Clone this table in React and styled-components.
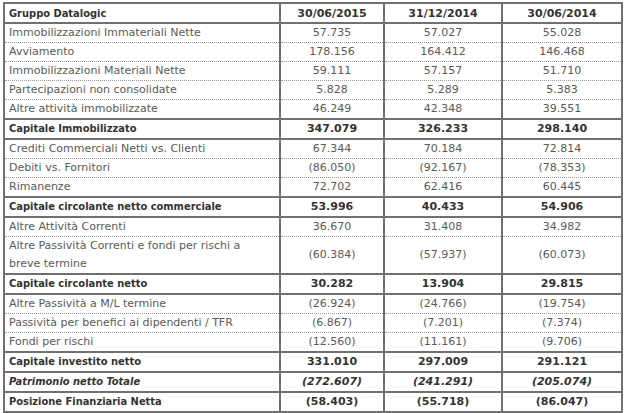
import React from 'react';
import styled, { createGlobalStyle } from 'styled-components';

const GlobalStyle = createGlobalStyle`
  html, body {
    margin: 0;
    padding: 0;
    background: #fff;
  }
  body {
    font-family: "DejaVu Sans", Verdana, sans-serif;
  }
`;

const Wrapper = styled.div`
  padding: 2px 3px;
  width: 624px;
  box-sizing: border-box;
`;

const Table = styled.table`
  width: 618px;
  border-collapse: collapse;
  table-layout: fixed;
  border: 2px solid #707070;
  font-size: 11px;
`;

const HeadCell = styled.th`
  height: 18px;
  padding: 0 4px;
  font-weight: bold;
  color: #333;
  font-family: ${(p) => (p.$label ? '"DejaVu Sans Condensed", "DejaVu Sans", sans-serif' : 'inherit')};
  text-align: ${(p) => (p.$label ? 'left' : 'center')};
  border-left: 2px solid #707070;
  border-bottom: 2px solid #707070;
`;

const Row = styled.tr`
  border-top: ${(p) => (p.$strong ? '2px solid #707070' : '1px dotted #9a9a9a')};
  border-bottom: ${(p) => (p.$strong ? '2px solid #707070' : '1px dotted #9a9a9a')};
`;

const Cell = styled.td`
  height: 17px;
  padding: 0 4px;
  line-height: 18px;
  color: ${(p) => (p.$strong ? '#333' : '#5a5a5a')};
  font-weight: ${(p) => (p.$strong ? 'bold' : 'normal')};
  font-style: ${(p) => (p.$italic ? 'italic' : 'normal')};
  font-family: ${(p) =>
    p.$label && p.$strong ? '"DejaVu Sans Condensed", "DejaVu Sans", sans-serif' : 'inherit'};
  text-align: ${(p) => (p.$label ? 'left' : 'center')};
  border-left: 2px solid #707070;
  vertical-align: middle;
`;

const rows = [
  ['Immobilizzazioni Immateriali Nette', '57.735', '57.027', '55.028'],
  ['Avviamento', '178.156', '164.412', '146.468'],
  ['Immobilizzazioni Materiali Nette', '59.111', '57.157', '51.710'],
  ['Partecipazioni non consolidate', '5.828', '5.289', '5.383'],
  ['Altre attività immobilizzate', '46.249', '42.348', '39.551'],
  ['Capitale Immobilizzato', '347.079', '326.233', '298.140', 'strong'],
  ['Crediti Commerciali Netti vs. Clienti', '67.344', '70.184', '72.814'],
  ['Debiti vs. Fornitori', '(86.050)', '(92.167)', '(78.353)'],
  ['Rimanenze', '72.702', '62.416', '60.445'],
  ['Capitale circolante netto commerciale', '53.996', '40.433', '54.906', 'strong'],
  ['Altre Attività Correnti', '36.670', '31.408', '34.982'],
  ['Altre Passività Correnti e fondi per rischi a breve termine', '(60.384)', '(57.937)', '(60.073)'],
  ['Capitale circolante netto', '30.282', '13.904', '29.815', 'strong'],
  ['Altre Passività a M/L termine', '(26.924)', '(24.766)', '(19.754)'],
  ['Passività per benefici ai dipendenti / TFR', '(6.867)', '(7.201)', '(7.374)'],
  ['Fondi per rischi', '(12.560)', '(11.161)', '(9.706)'],
  ['Capitale investito netto', '331.010', '297.009', '291.121', 'strong'],
  ['Patrimonio netto Totale', '(272.607)', '(241.291)', '(205.074)', 'italic'],
  ['Posizione Finanziaria Netta', '(58.403)', '(55.718)', '(86.047)', 'strong'],
];

export default function App() {
  return (
    <Wrapper>
      <GlobalStyle />
      <Table>
        <colgroup>
          <col style={{ width: 276 }} />
          <col style={{ width: 104 }} />
          <col style={{ width: 118 }} />
          <col style={{ width: 120 }} />
        </colgroup>
        <thead>
          <tr>
            <HeadCell $label>Gruppo Datalogic</HeadCell>
            <HeadCell>30/06/2015</HeadCell>
            <HeadCell>31/12/2014</HeadCell>
            <HeadCell>30/06/2014</HeadCell>
          </tr>
        </thead>
        <tbody>
          {rows.map(([label, a, b, c, kind]) => {
            const strong = kind === 'strong' || kind === 'italic';
            const italic = kind === 'italic';
            return (
              <Row key={label} $strong={strong}>
                <Cell $label $strong={strong} $italic={italic}>{label}</Cell>
                <Cell $strong={strong} $italic={italic}>{a}</Cell>
                <Cell $strong={strong} $italic={italic}>{b}</Cell>
                <Cell $strong={strong} $italic={italic}>{c}</Cell>
              </Row>
            );
          })}
        </tbody>
      </Table>
    </Wrapper>
  );
}
